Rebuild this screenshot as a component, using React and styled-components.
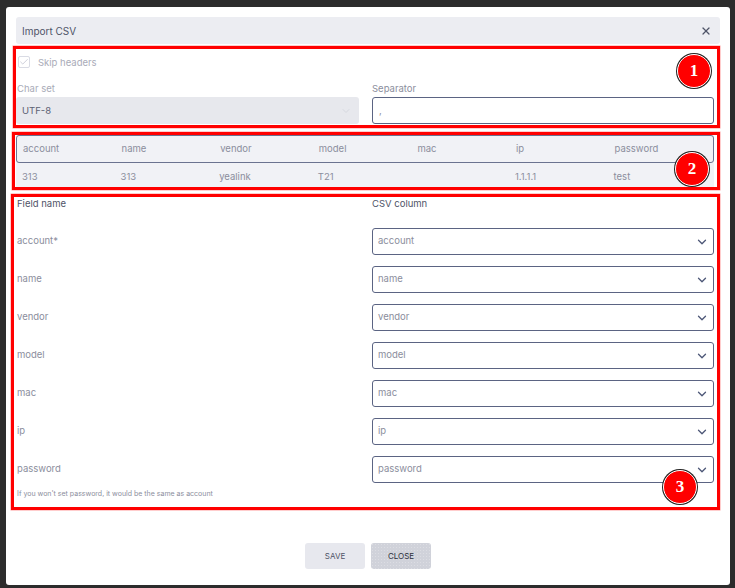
import React from "react";
import styled, { createGlobalStyle } from "styled-components";
import { ChevronDown, X, Check } from "lucide-react";

const GlobalStyle = createGlobalStyle`
  html, body {
    margin: 0;
    height: 100%;
    background: #2c2c2c;
    overflow: hidden;
  }
  * {
    box-sizing: border-box;
  }
`;

const Dialog = styled.div`
  width: 724px;
  height: 578px;
  margin: 7px 0 0 6px;
  padding: 10px;
  background: #ffffff;
  border-radius: 3px;
  font-family: "Inter", "Open Sans", sans-serif;
  font-size: 9.5px;
  color: #8b8e9d;
`;

const Header = styled.div`
  height: 27px;
  padding: 0 8px 0 6px;
  display: flex;
  align-items: center;
  justify-content: space-between;
  background: #ecedf2;
  border-radius: 3px;
  color: #4f5468;
  font-size: 10px;
`;

const Section = styled.section`
  position: relative;
  height: ${(p) => p.$height}px;
  margin-top: ${(p) => p.$top}px;
  margin-left: ${(p) => p.$left}px;
  width: ${(p) => 704 - p.$left}px;
  padding-left: ${(p) => p.$inset}px;
  border: 3px solid #ff0000;
  box-shadow: 0 0 0 0.5px #ff9a9a;
`;

const Badge = styled.div`
  position: absolute;
  left: ${(p) => p.$x}px;
  top: ${(p) => p.$y}px;
  width: 34px;
  height: 34px;
  display: flex;
  align-items: center;
  justify-content: center;
  border-radius: 50%;
  background: #ff0000;
  border: 1px solid #ffffff;
  box-shadow: 0 0 0 1px #222222;
  color: #ffffff;
  font-family: "Liberation Serif", serif;
  font-weight: 700;
  font-size: 17px;
`;

const CheckRow = styled.div`
  height: 26px;
  padding-left: 2px;
  display: flex;
  align-items: center;
  gap: 8px;
  color: #a9abb8;
`;

const CheckBox = styled.span`
  width: 12px;
  height: 12px;
  display: flex;
  align-items: center;
  justify-content: center;
  border: 1px solid #d9dbe4;
  border-radius: 2px;
  color: #c4c7d3;
`;

const FieldGrid = styled.div`
  display: grid;
  grid-template-columns: 343px 342px;
  column-gap: 13px;
`;

const FieldLabel = styled.label`
  display: block;
  height: 22px;
  padding: 8px 0 0 ${(p) => (p.$muted ? 1 : 0)}px;
  line-height: 12px;
  color: ${(p) => (p.$muted ? "#a9abb8" : "#8b8e9d")};
`;

const DisabledSelect = styled.div`
  height: 27px;
  padding: 0 7px 0 6px;
  display: flex;
  align-items: center;
  justify-content: space-between;
  background: #e7e8ed;
  border-radius: 3px;
  color: #5c6073;
`;

const TextInput = styled.input`
  display: block;
  width: 100%;
  height: 27px;
  padding: 0 6px;
  border: 1px solid #5b6483;
  border-radius: 3px;
  outline: none;
  background: #ffffff;
  font: inherit;
  color: #8b8e9d;
`;

const PreviewTable = styled.div`
  width: 698px;
  background: #f1f2f6;
`;

const PreviewHead = styled.div`
  height: 28px;
  padding: 0 0 1px 6px;
  display: grid;
  grid-template-columns: repeat(7, 98.6px);
  align-items: center;
  border: 1px solid #6b7390;
  border-radius: 3px;
`;

const PreviewRow = styled.div`
  height: 24px;
  padding: 2px 0 0 6px;
  display: grid;
  grid-template-columns: repeat(7, 98.6px);
  align-items: center;
`;

const MapHeader = styled.div`
  height: 13px;
  margin-bottom: 18px;
  display: grid;
  grid-template-columns: 355px 342px;
  align-items: center;
  color: #4f5468;
`;

const MapRows = styled.div`
  display: flex;
  flex-direction: column;
  gap: 11px;
`;

const MapRow = styled.div`
  display: grid;
  grid-template-columns: 355px 342px;
  align-items: center;
`;

const FieldName = styled.span`
  padding-bottom: 2px;
`;

const SelectBox = styled.div`
  height: 27px;
  padding: 0 4px 0 5px;
  display: flex;
  align-items: center;
  justify-content: space-between;
  border: 1px solid #5b6483;
  border-radius: 3px;
  color: #8b8e9d;
  span {
    margin-top: -2px;
  }
  svg {
    color: #4d5777;
  }
`;

const Hint = styled.div`
  height: 24px;
  line-height: 22px;
  font-size: 7px;
  color: #8b8e9d;
`;

const Footer = styled.div`
  margin-top: 33px;
  display: flex;
  justify-content: center;
  gap: 6px;
`;

const Button = styled.button`
  width: 60px;
  height: 26px;
  border: none;
  border-radius: 3px;
  background-color: ${(p) => (p.$active ? "#d0d2da" : "#e7e8ee")};
  background-image: ${(p) =>
    p.$active
      ? "radial-gradient(rgba(255,255,255,0.25) 0.5px, transparent 0.6px)"
      : "none"};
  background-size: 3px 3px;
  color: ${(p) => (p.$active ? "#2c2f3a" : "#4f5468")};
  font-family: inherit;
  font-size: 8px;
  font-weight: 400;
`;

const columns = ["account", "name", "vendor", "model", "mac", "ip", "password"];
const sample = ["313", "313", "yealink", "T21", "", "1.1.1.1", "test"];
const labels = { account: "account*" };

export default function App() {
  return (
    <>
      <GlobalStyle />
      <Dialog>
        <Header>
          <span>Import CSV</span>
          <X size={12} strokeWidth={2.4} color="#4f5468" />
        </Header>

        <Section $top={2} $left={-3} $inset={0} $height={82}>
          <CheckRow>
            <CheckBox>
              <Check size={10} strokeWidth={2} />
            </CheckBox>
            Skip headers
          </CheckRow>
          <FieldGrid>
            <div>
              <FieldLabel $muted>Char set</FieldLabel>
              <DisabledSelect>
                UTF-8
                <ChevronDown size={12} strokeWidth={1.5} color="#cfd1da" />
              </DisabledSelect>
            </div>
            <div>
              <FieldLabel>Separator</FieldLabel>
              <TextInput readOnly value="," />
            </div>
          </FieldGrid>
          <Badge $x={661} $y={5}>1</Badge>
        </Section>

        <Section $top={4} $left={-4} $inset={1} $height={58}>
          <PreviewTable>
            <PreviewHead>
              {columns.map((c) => (
                <span key={c}>{c}</span>
              ))}
            </PreviewHead>
            <PreviewRow>
              {sample.map((v, i) => (
                <span key={i}>{v}</span>
              ))}
            </PreviewRow>
          </PreviewTable>
          <Badge $x={660} $y={17}>2</Badge>
        </Section>

        <Section $top={4} $left={-5} $inset={3} $height={316}>
          <MapHeader>
            <span>Field name</span>
            <span>CSV column</span>
          </MapHeader>
          <MapRows>
            {columns.map((c) => (
              <MapRow key={c}>
                <FieldName>{labels[c] || c}</FieldName>
                <SelectBox>
                  <span>{c}</span>
                  <ChevronDown size={14} strokeWidth={2.2} />
                </SelectBox>
              </MapRow>
            ))}
          </MapRows>
          <Hint>If you won't set password, it would be the same as account</Hint>
          <Badge $x={649} $y={273}>3</Badge>
        </Section>

        <Footer>
          <Button>SAVE</Button>
          <Button $active>CLOSE</Button>
        </Footer>
      </Dialog>
    </>
  );
}
